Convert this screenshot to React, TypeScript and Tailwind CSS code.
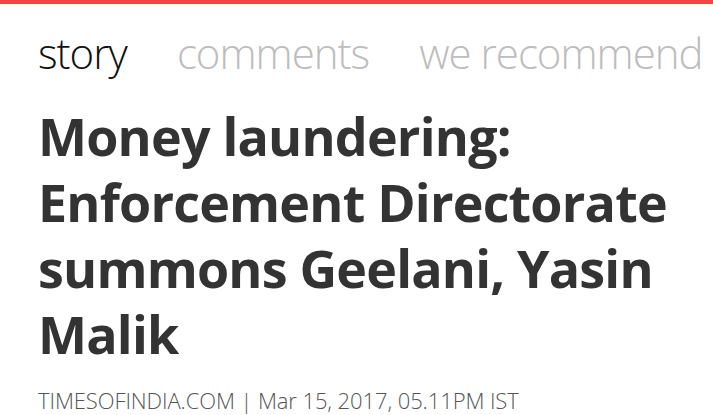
export default function App() {
  return (
    <div className="w-[713px] h-[415px] bg-white overflow-hidden" style={{ fontFamily: '"Open Sans", "Noto Sans", sans-serif' }}>
      <div className="h-[4px] bg-[#ef4545]" />
      <div className="h-[4px] bg-[#fffdf3]" />
      <div className="flex items-baseline pl-[38px] pt-[20px] text-[42px] font-light leading-[50px] tracking-[-1px]">
        <span className="text-[#111]">story</span>
        <span className="ml-[50px] text-[#bdbdbd]">comments</span>
        <span className="ml-[50px] text-[#bdbdbd] whitespace-nowrap">we recommend</span>
      </div>
      <h1 className="pl-[38px] pr-[20px] mt-[25px] text-[52px] font-bold leading-[66px] text-[#333] tracking-[-0.8px]">
        Money laundering: Enforcement Directorate summons Geelani, Yasin Malik
      </h1>
      <div className="pl-[38px] mt-[20px] text-[22px] leading-[26px] font-light text-[#555] tracking-[-0.1px] whitespace-nowrap">
        TIMESOFINDIA.COM | Mar 15, 2017, 05.11PM IST
      </div>
    </div>
  );
}
